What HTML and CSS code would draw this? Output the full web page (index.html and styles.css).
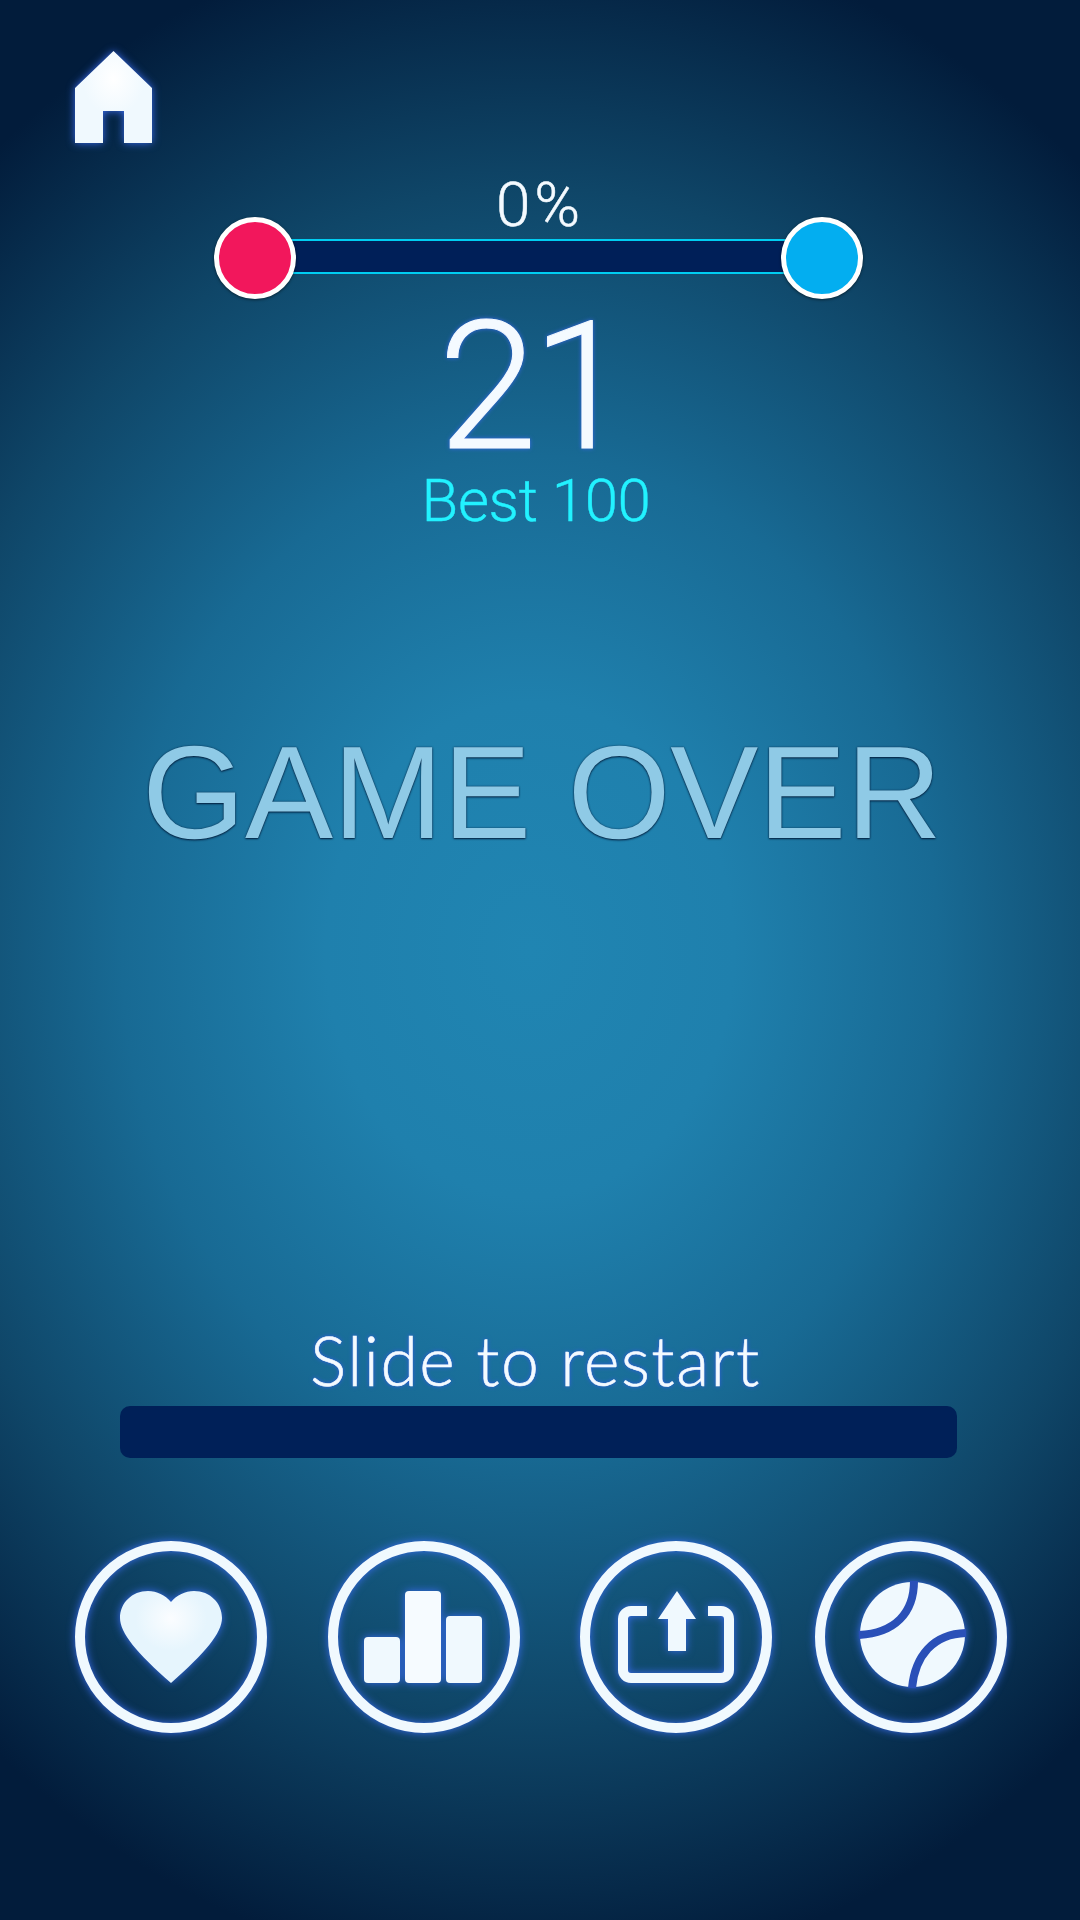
FILE: index.html
```html
<!DOCTYPE html>
<html lang="en">
<head>
    <meta charset="UTF-8">
    <meta name="viewport" content="width=device-width, initial-scale=1.0">
    <title>Game Over</title>
    <link rel="stylesheet" href="styles.css">
</head>
<body>
    <div class="screen">
        <svg class="home glow" viewBox="0 0 77 92" width="77" height="92">
            <defs>
                <radialGradient id="shine" cx="0.5" cy="0.3" r="0.4">
                    <stop offset="0" stop-color="#ffffff"/>
                    <stop offset="1" stop-color="#f0f9fe"/>
                </radialGradient>
            </defs>
            <path d="M38.5 0 L77 37 V92 H49 V60 H28 V92 H0 V37 Z" fill="url(#shine)"/>
        </svg>

        <div class="percent">0%</div>
        <div class="progress">
            <div class="dot dot-red"></div>
            <div class="track"></div>
            <div class="dot dot-blue"></div>
        </div>

        <div class="score">21</div>
        <div class="best">Best 100</div>

        <h1 class="title">GAME OVER</h1>

        <div class="slide-label">Slide to restart</div>
        <div class="slide-bar"></div>

        <div class="buttons">
            <svg class="btn glow" viewBox="0 0 192 192" width="192" height="192">
                <defs>
                    <radialGradient id="heart-shine" cx="0.5" cy="0.3" r="0.35">
                        <stop offset="0" stop-color="#fbfdff"/>
                        <stop offset="1" stop-color="#e6f5fd"/>
                    </radialGradient>
                </defs>
                <circle cx="96" cy="96" r="91" fill="none" stroke="#f0f9fe" stroke-width="10"/>
                <path d="M96 61 C90 54 82 50 73 50 C57 50 45 62 45 77 C45 92 62 112 96 142 C130 112 147 92 147 77 C147 62 135 50 119 50 C110 50 102 54 96 61 Z" fill="url(#heart-shine)"/>
            </svg>
            <svg class="btn glow" viewBox="0 0 192 192" width="192" height="192">
                <circle cx="96" cy="96" r="91" fill="none" stroke="#f0f9fe" stroke-width="10"/>
                <rect x="36" y="96" width="36" height="46" rx="4" fill="#f0f9fe"/>
                <rect x="77" y="50" width="36" height="92" rx="4" fill="#f6fbff"/>
                <rect x="118" y="75" width="36" height="67" rx="4" fill="#f0f9fe"/>
            </svg>
            <svg class="btn glow" viewBox="0 0 192 192" width="192" height="192">
                <circle cx="96" cy="96" r="91" fill="none" stroke="#f0f9fe" stroke-width="10"/>
                <path d="M67 70 H51 A8 8 0 0 0 43 78 V129 A8 8 0 0 0 51 137 H141 A8 8 0 0 0 149 129 V78 A8 8 0 0 0 141 70 H128" fill="none" stroke="#f0f9fe" stroke-width="10"/>
                <path d="M97 50 L116 78 H106 V110 H88 V78 H78 Z" fill="#f0f9fe"/>
            </svg>
            <svg class="btn glow" viewBox="0 0 192 192" width="192" height="192">
                <circle cx="96" cy="96" r="91" fill="none" stroke="#f0f9fe" stroke-width="10"/>
                <circle cx="97.5" cy="93.5" r="52.5" fill="#f0f9fe"/>
                <path d="M99 40 C99 72 80 92 44 94 M151 92 C118 93 100 115 97 147" fill="none" stroke="#2a50b8" stroke-width="8"/>
            </svg>
        </div>
    </div>
</body>
</html>
```

FILE: styles.css
```css
html, body {
    margin: 0;
    padding: 0;
}
.screen {
    width: 1080px;
    height: 1920px;
    overflow: hidden;
    font-family: "Lato", "Liberation Sans", sans-serif;
    font-weight: 400;
    text-align: center;
    color: #f4faff;
    background: radial-gradient(ellipse 850px 1030px at 530px 950px, #2085b2 0%, #1f80ad 24%, #186a94 48%, #0f4668 74%, #021c3b 100%);
    background-color: #021c3b;
    display: flow-root;
}
.glow {
    filter: drop-shadow(0 0 4px #3a6cf0);
}
.home {
    display: block;
    margin: 51px 0 0 75px;
}
.percent {
    height: 60px;
    line-height: 60px;
    margin: 32px 0 -18px;
    font-family: "Roboto", sans-serif;
    font-weight: 300;
    font-size: 62px;
    letter-spacing: 4px;
    -webkit-text-stroke: 0.5px #f4faff;
}
.progress {
    display: flex;
    align-items: center;
    width: 649px;
    margin-left: 214px;
}
.dot {
    flex: none;
    width: 82px;
    height: 82px;
    box-sizing: border-box;
    border: 5px solid #fff;
    border-radius: 50%;
    box-shadow: 0 1px 3px rgba(0,0,0,0.5);
    position: relative;
}
.dot-red {
    background-color: #f2175c;
}
.dot-blue {
    background-color: #03aef0;
}
.track {
    flex: 1;
    height: 31px;
    margin: 0 -6px 3px;
    background-color: #001f58;
    border-top: 2px solid #00cdf2;
    border-bottom: 2px solid #00cdf2;
}
.score {
    height: 170px;
    line-height: 176px;
    padding-right: 16px;
    font-family: "Roboto", sans-serif;
    font-weight: 300;
    font-size: 178px;
    letter-spacing: -5px;
    -webkit-text-stroke: 1px #f4faff;
    filter: drop-shadow(0 0 2px #3566e6);
}
.best {
    height: 64px;
    line-height: 64px;
    padding-right: 8px;
    font-family: "Roboto", sans-serif;
    font-weight: 300;
    font-size: 60px;
    letter-spacing: -0.4px;
    -webkit-text-stroke: 0.4px #22f2ff;
    color: #22f2ff;
}
.title {
    margin: 190px 0 0;
    padding-left: 4px;
    height: 130px;
    line-height: 140px;
    font-family: "Liberation Sans", Arial, sans-serif;
    font-weight: 400;
    font-size: 132px;
    text-rendering: geometricPrecision;
    color: #8fcae6;
    text-shadow: 0 1px 2px rgba(0,25,55,0.9), 0 0 2px rgba(0,25,55,0.6);
}
.slide-label {
    height: 70px;
    line-height: 70px;
    margin-top: 472px;
    padding-right: 9px;
    font-size: 68px;
    font-weight: 300;
    letter-spacing: 1.5px;
    -webkit-text-stroke: 0.6px #f4faff;
    filter: drop-shadow(0 0 2px #2f5be0);
}
.slide-bar {
    width: 837px;
    height: 52px;
    margin: 11px 0 0 120px;
    background-color: #002058;
    border-radius: 10px;
}
.buttons {
    display: flex;
    margin: 83px 0 0 75px;
}
.btn {
    flex: none;
    margin-right: 61px;
}
.btn:nth-child(2) {
    margin-right: 60px;
}
.btn:nth-child(3) {
    margin-right: 43px;
}
```
